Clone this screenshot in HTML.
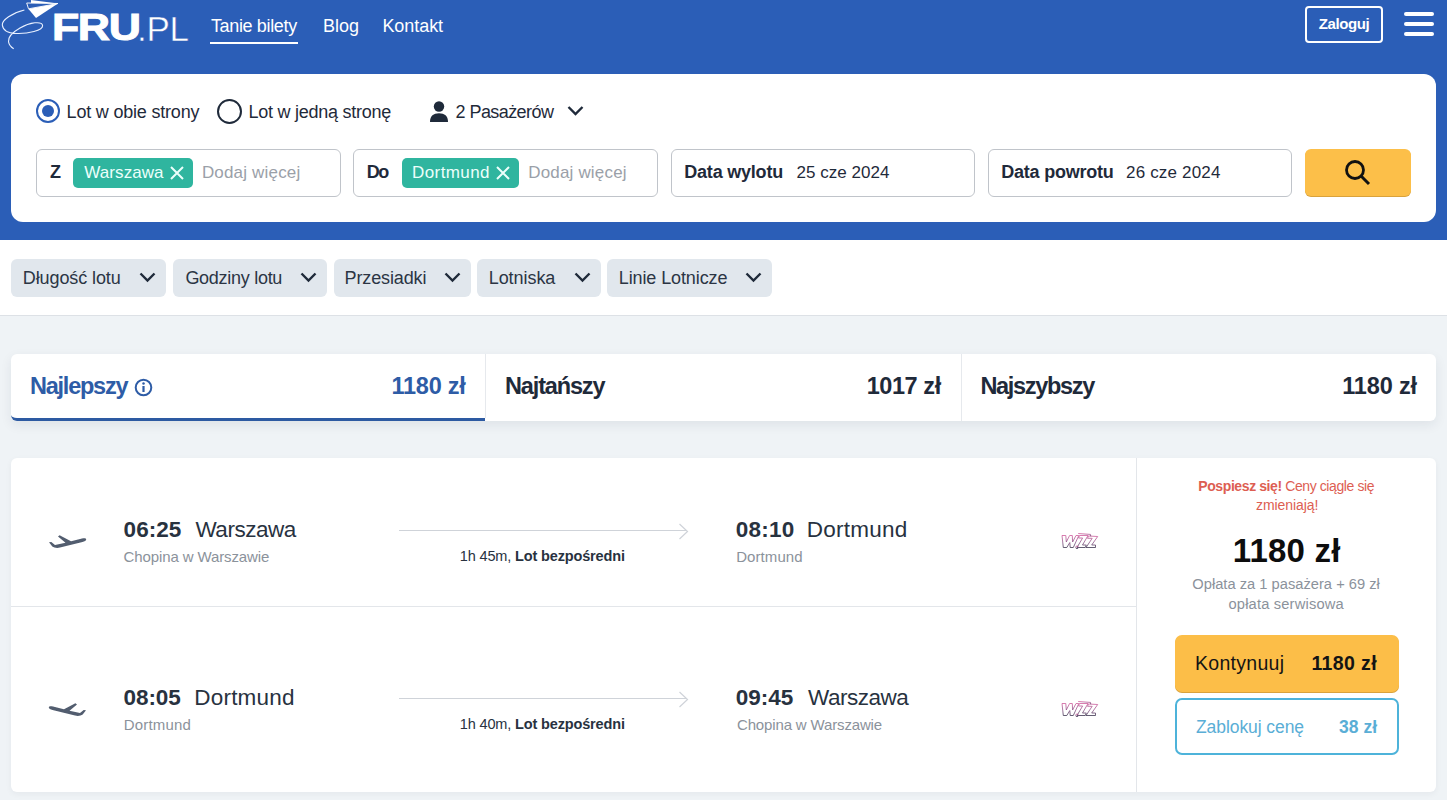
<!DOCTYPE html>
<html><head><meta charset="utf-8"><style>
html,body{margin:0;padding:0;width:1447px;height:800px;overflow:hidden;background:#eff3f6;font-family:"Liberation Sans", sans-serif;}
.t{position:absolute;white-space:nowrap;line-height:1;}
.b{position:absolute;}
</style></head><body>
<div class="b" style="left:0px;top:0px;width:1447px;height:240px;background:#2b5eb7;"></div>
<svg class="b" style="left:0;top:0" width="200" height="52" viewBox="0 0 200 52">
<path d="M24.4,10 C12,13 2,20 2.3,25 C3,31 9,33.2 16,33.5 C28,34 43,30.5 42.6,25.5 C42,21 30,22 20,28 C13,32 8,37 8.5,41.6 C9,45 11,47 13.7,48.8" fill="none" stroke="#e8f0ff" stroke-width="1.1"/>
<path d="M31,0 L58,3.5 L31,3 Z" fill="#fff"/>
<path d="M26.7,3 L58,3.5 L28.5,8.8 Z" fill="none" stroke="#fff" stroke-width="0.9"/>
<path d="M28.5,9 L58,3.5 L36,18 Z" fill="#fff"/>
</svg>
<div class="t" style="left:52.00px;top:8.86px;font-size:37.5px;font-weight:700;color:#fff;letter-spacing:-1.200px;transform:scaleX(1.19);transform-origin:left;-webkit-text-stroke:1px #fff;">FRU</div>
<div class="t" style="left:137.00px;top:10.97px;font-size:35px;font-weight:400;color:#fff;letter-spacing:-0.300px;-webkit-text-stroke:0.5px #2b5eb7;">.PL</div>
<div class="t" style="left:210.90px;top:16.76px;font-size:18px;font-weight:400;color:#fff;letter-spacing:-0.345px;">Tanie bilety</div>
<div class="b" style="left:210px;top:42px;width:88px;height:2px;background:#fff;"></div>
<div class="t" style="left:323.00px;top:16.76px;font-size:18px;font-weight:400;color:#fff;letter-spacing:0.000px;">Blog</div>
<div class="t" style="left:382.40px;top:16.76px;font-size:18px;font-weight:400;color:#fff;letter-spacing:-0.060px;">Kontakt</div>
<div class="b" style="left:1305px;top:6px;width:78px;height:37px;border:2px solid #fff;border-radius:4px;box-sizing:border-box;"></div>
<div class="t" style="left:1318.80px;top:16.30px;font-size:15px;font-weight:700;color:#fff;letter-spacing:-0.420px;">Zaloguj</div>
<div class="b" style="left:1404px;top:12px;width:30px;height:4px;background:#fff;border-radius:2px;"></div>
<div class="b" style="left:1404px;top:22px;width:30px;height:4px;background:#fff;border-radius:2px;"></div>
<div class="b" style="left:1404px;top:32px;width:30px;height:4px;background:#fff;border-radius:2px;"></div>
<div class="b" style="left:11px;top:74px;width:1425px;height:148px;background:#fff;border-radius:12px;"></div>
<div class="b" style="left:36px;top:98.5px;width:24px;height:24px;border:2.5px solid #2b5eb7;border-radius:50%;box-sizing:border-box;"></div>
<div class="b" style="left:42px;top:104.5px;width:12px;height:12px;background:#2b5eb7;border-radius:50%;"></div>
<div class="t" style="left:66.60px;top:102.76px;font-size:18px;font-weight:400;color:#1f2a3a;letter-spacing:-0.201px;">Lot w obie strony</div>
<div class="b" style="left:217px;top:98.5px;width:25px;height:25px;border:2.5px solid #1f2a3a;border-radius:50%;box-sizing:border-box;"></div>
<div class="t" style="left:248.60px;top:102.76px;font-size:18px;font-weight:400;color:#1f2a3a;letter-spacing:-0.264px;">Lot w jedną stronę</div>
<svg class="b" style="left:429px;top:101px" width="20" height="22" viewBox="0 0 20 22">
<circle cx="10" cy="5.5" r="5.2" fill="#1f2a3a"/>
<path d="M1,21 C1,15 4.5,12.3 10,12.3 C15.5,12.3 19,15 19,21 Z" fill="#1f2a3a"/>
</svg>
<div class="t" style="left:455.60px;top:102.76px;font-size:18px;font-weight:400;color:#1f2a3a;letter-spacing:-0.576px;">2 Pasażerów</div>
<svg class="b" style="left:566px;top:104px" width="19" height="13" viewBox="0 0 19 13">
<path d="M2.5,3 L9.5,10 L16.5,3" fill="none" stroke="#1f2a3a" stroke-width="2.4"/>
</svg>
<div class="b" style="left:36px;top:149px;width:305px;height:48px;border:1px solid #c0c4ca;border-radius:6px;box-sizing:border-box;"></div>
<div class="b" style="left:353px;top:149px;width:305px;height:48px;border:1px solid #c0c4ca;border-radius:6px;box-sizing:border-box;"></div>
<div class="b" style="left:670.5px;top:149px;width:304.5px;height:48px;border:1px solid #c0c4ca;border-radius:6px;box-sizing:border-box;"></div>
<div class="b" style="left:988px;top:149px;width:304px;height:48px;border:1px solid #c0c4ca;border-radius:6px;box-sizing:border-box;"></div>
<div class="t" style="left:50.00px;top:162.76px;font-size:18px;font-weight:700;color:#1f2a3a;letter-spacing:0.000px;">Z</div>
<div class="b" style="left:73px;top:158px;width:120px;height:30px;background:#2fb59f;border-radius:5px;"></div>
<div class="t" style="left:84.30px;top:164.11px;font-size:17px;font-weight:400;color:#ecfffb;letter-spacing:0.077px;">Warszawa</div>
<svg class="b" style="left:169.5px;top:166px" width="14" height="14" viewBox="0 0 14 14">
<path d="M1,1 L13,13 M13,1 L1,13" stroke="#ecfffb" stroke-width="2"/></svg>
<div class="t" style="left:201.90px;top:164.11px;font-size:17px;font-weight:400;color:#9aa0a8;letter-spacing:0.181px;">Dodaj więcej</div>
<div class="t" style="left:366.80px;top:162.76px;font-size:18px;font-weight:700;color:#1f2a3a;letter-spacing:-1.620px;">Do</div>
<div class="b" style="left:402px;top:158px;width:117px;height:30px;background:#2fb59f;border-radius:5px;"></div>
<div class="t" style="left:412.10px;top:164.11px;font-size:17px;font-weight:400;color:#ecfffb;letter-spacing:0.386px;">Dortmund</div>
<svg class="b" style="left:495.5px;top:166px" width="14" height="14" viewBox="0 0 14 14">
<path d="M1,1 L13,13 M13,1 L1,13" stroke="#ecfffb" stroke-width="2"/></svg>
<div class="t" style="left:528.20px;top:164.11px;font-size:17px;font-weight:400;color:#9aa0a8;letter-spacing:0.181px;">Dodaj więcej</div>
<div class="t" style="left:684.30px;top:162.76px;font-size:18px;font-weight:700;color:#1f2a3a;letter-spacing:-0.216px;">Data wylotu</div>
<div class="t" style="left:796.40px;top:164.11px;font-size:17px;font-weight:400;color:#1f2a3a;letter-spacing:0.036px;">25 cze 2024</div>
<div class="t" style="left:1001.30px;top:162.76px;font-size:18px;font-weight:700;color:#1f2a3a;letter-spacing:-0.228px;">Data powrotu</div>
<div class="t" style="left:1126.00px;top:164.11px;font-size:17px;font-weight:400;color:#1f2a3a;letter-spacing:0.180px;">26 cze 2024</div>
<div class="b" style="left:1305px;top:149px;width:106px;height:47px;background:#fcbf49;border-radius:6px;box-shadow:0 1px 0 #d9a23c;"></div>
<svg class="b" style="left:1343px;top:158px" width="30" height="30" viewBox="0 0 30 30">
<circle cx="12" cy="12" r="8.5" fill="none" stroke="#111" stroke-width="2.8"/>
<path d="M18.3,18.3 L26,26" stroke="#111" stroke-width="3"/>
</svg>
<div class="b" style="left:0px;top:240px;width:1447px;height:75px;background:#fff;border-bottom:1px solid #dde1e6;"></div>
<div class="b" style="left:11px;top:259px;width:155px;height:38px;background:#e1e7ed;border-radius:6px;"></div>
<div class="t" style="left:22.80px;top:269.26px;font-size:18px;font-weight:400;color:#2b3544;letter-spacing:-0.099px;">Długość lotu</div>
<svg class="b" style="left:138px;top:270px" width="19" height="14" viewBox="0 0 19 14">
<path d="M2.5,3.5 L9.5,10.5 L16.5,3.5" fill="none" stroke="#1f2a3a" stroke-width="2.4"/>
</svg>
<div class="b" style="left:173px;top:259px;width:154px;height:38px;background:#e1e7ed;border-radius:6px;"></div>
<div class="t" style="left:185.40px;top:269.26px;font-size:18px;font-weight:400;color:#2b3544;letter-spacing:-0.280px;">Godziny lotu</div>
<svg class="b" style="left:299px;top:270px" width="19" height="14" viewBox="0 0 19 14">
<path d="M2.5,3.5 L9.5,10.5 L16.5,3.5" fill="none" stroke="#1f2a3a" stroke-width="2.4"/>
</svg>
<div class="b" style="left:333.5px;top:259px;width:137.0px;height:38px;background:#e1e7ed;border-radius:6px;"></div>
<div class="t" style="left:344.50px;top:269.26px;font-size:18px;font-weight:400;color:#2b3544;letter-spacing:-0.120px;">Przesiadki</div>
<svg class="b" style="left:442.5px;top:270px" width="19" height="14" viewBox="0 0 19 14">
<path d="M2.5,3.5 L9.5,10.5 L16.5,3.5" fill="none" stroke="#1f2a3a" stroke-width="2.4"/>
</svg>
<div class="b" style="left:477px;top:259px;width:123.5px;height:38px;background:#e1e7ed;border-radius:6px;"></div>
<div class="t" style="left:488.70px;top:269.26px;font-size:18px;font-weight:400;color:#2b3544;letter-spacing:-0.051px;">Lotniska</div>
<svg class="b" style="left:572.5px;top:270px" width="19" height="14" viewBox="0 0 19 14">
<path d="M2.5,3.5 L9.5,10.5 L16.5,3.5" fill="none" stroke="#1f2a3a" stroke-width="2.4"/>
</svg>
<div class="b" style="left:607px;top:259px;width:165px;height:38px;background:#e1e7ed;border-radius:6px;"></div>
<div class="t" style="left:618.80px;top:269.26px;font-size:18px;font-weight:400;color:#2b3544;letter-spacing:-0.112px;">Linie Lotnicze</div>
<svg class="b" style="left:744px;top:270px" width="19" height="14" viewBox="0 0 19 14">
<path d="M2.5,3.5 L9.5,10.5 L16.5,3.5" fill="none" stroke="#1f2a3a" stroke-width="2.4"/>
</svg>
<div class="b" style="left:11px;top:354px;width:1425px;height:67px;background:#fff;border-radius:6px;box-shadow:0 4px 12px rgba(30,40,60,0.08);"></div>
<div class="b" style="left:485px;top:354px;width:1px;height:64px;background:#e6e9ed;"></div>
<div class="b" style="left:961px;top:354px;width:1px;height:67px;background:#e6e9ed;"></div>
<div class="b" style="left:11px;top:354px;width:474px;height:67px;border-bottom:3px solid #2d5aa2;border-radius:6px 0 0 6px;box-sizing:border-box;"></div>
<div class="t" style="left:30.00px;top:374.91px;font-size:23.5px;font-weight:700;color:#2e5ca6;letter-spacing:-1.238px;">Najlepszy</div>
<svg class="b" style="left:134px;top:378px" width="19" height="19" viewBox="0 0 19 19">
<circle cx="9.5" cy="9.5" r="7.8" fill="none" stroke="#2e5ca6" stroke-width="2"/>
<rect x="8.4" y="8" width="2.2" height="6" fill="#2e5ca6"/><circle cx="9.5" cy="5.6" r="1.25" fill="#2e5ca6"/>
</svg>
<div class="t" style="right:981.40px;text-align:right;top:374.91px;font-size:23.5px;font-weight:700;color:#2e5ca6;letter-spacing:-0.240px;">1180 zł</div>
<div class="t" style="left:505.00px;top:374.91px;font-size:23.5px;font-weight:700;color:#1f2a3a;letter-spacing:-1.145px;">Najtańszy</div>
<div class="t" style="right:506.20px;text-align:right;top:374.91px;font-size:23.5px;font-weight:700;color:#1f2a3a;letter-spacing:-0.420px;">1017 zł</div>
<div class="t" style="left:980.40px;top:374.91px;font-size:23.5px;font-weight:700;color:#1f2a3a;letter-spacing:-1.320px;">Najszybszy</div>
<div class="t" style="right:30.00px;text-align:right;top:374.91px;font-size:23.5px;font-weight:700;color:#1f2a3a;letter-spacing:-0.150px;">1180 zł</div>
<div class="b" style="left:11px;top:458px;width:1425px;height:334px;background:#fff;border-radius:6px;box-shadow:0 2px 6px rgba(30,40,60,0.05);"></div>
<div class="b" style="left:1136px;top:458px;width:1px;height:334px;background:#e3e6ea;"></div>
<div class="b" style="left:11px;top:606px;width:1125px;height:1px;background:#e3e6ea;"></div>
<svg class="b" style="left:44px;top:528px;" width="48" height="26" viewBox="0 0 48 26">
<path d="M5,14.3 L7.3,13.9 L11,17 L21.5,14.8 L14,8.4 L15.6,7.3 L27,13.3 L38,10.6 C40.5,10 42.2,10.4 42.2,11.4 C42.2,12.5 40.5,13.3 38.5,14 L16,19.6 C13,20.2 10,19.8 8.3,18.6 Z" fill="#525d6f"/>
</svg>
<div class="t" style="left:123.60px;top:519.45px;font-size:22.5px;font-weight:700;color:#28323f;letter-spacing:0.041px;">06:25</div>
<div class="t" style="left:195.40px;top:519.45px;font-size:22.5px;font-weight:400;color:#28323f;letter-spacing:-0.462px;">Warszawa</div>
<div class="t" style="left:123.60px;top:549.30px;font-size:15px;font-weight:400;color:#8b929b;letter-spacing:-0.120px;">Chopina w Warszawie</div>
<div class="b" style="left:399px;top:530px;width:287px;height:1px;background:#cfd3d9;"></div>
<svg class="b" style="left:678px;top:523px" width="12" height="17" viewBox="0 0 12 17">
<path d="M1.5,1 L9.5,8.5 L1.5,16" fill="none" stroke="#cfd3d9" stroke-width="1.2"/></svg>
<div class="t" style="left:242.30px;width:600px;text-align:center;top:548.73px;font-size:14.5px;font-weight:400;color:#28323f;letter-spacing:-0.146px;">1h 45m, <b>Lot bezpośredni</b></div>
<div class="t" style="left:735.80px;top:519.45px;font-size:22.5px;font-weight:700;color:#28323f;letter-spacing:0.225px;">08:10</div>
<div class="t" style="left:806.80px;top:519.45px;font-size:22.5px;font-weight:400;color:#28323f;letter-spacing:0.257px;">Dortmund</div>
<div class="t" style="left:736.20px;top:549.30px;font-size:15px;font-weight:400;color:#8b929b;letter-spacing:0.078px;">Dortmund</div>
<svg class="b" style="left:1050px;top:525px" width="60" height="35" viewBox="0 0 60 35">
<defs><linearGradient id="wza" x1="0" y1="0" x2="0" y2="1"><stop offset="0" stop-color="#cf5c9c"/><stop offset="0.55" stop-color="#8d5488"/><stop offset="1" stop-color="#3e3550"/></linearGradient></defs>
<g fill="none" stroke="url(#wza)" stroke-width="0.8" stroke-linejoin="round">
<path d="M12,10.5 L15.8,10.5 L16.3,17 L19.6,10.5 L22.3,10.5 L22.6,17 L26,10.5 L28.8,10.5 L23.3,22.5 L20.2,22.5 L19.8,17.5 L16.8,22.5 L13.3,22.5 Z"/>
<path d="M29.5,10.5 L38,10.5 L32.5,20 L36.3,20 L35.2,22.5 L27,22.5 L32.6,13 L28.5,13 Z"/>
<path d="M38.5,11 L47.7,11.5 L41.7,20 L45.5,20 L45.5,22.5 L36,22.5 L42.2,13.3 L37.5,13.3 Z"/>
<path d="M28.2,8.5 L40.5,9.4 L40.7,11.2"/>
<circle cx="27" cy="22.3" r="1.3"/>
</g></svg>
<svg class="b" style="left:43px;top:696px;transform:scaleX(-1);" width="48" height="26" viewBox="0 0 48 26">
<path d="M5,14.3 L7.3,13.9 L11,17 L21.5,14.8 L14,8.4 L15.6,7.3 L27,13.3 L38,10.6 C40.5,10 42.2,10.4 42.2,11.4 C42.2,12.5 40.5,13.3 38.5,14 L16,19.6 C13,20.2 10,19.8 8.3,18.6 Z" fill="#525d6f"/>
</svg>
<div class="t" style="left:123.60px;top:687.45px;font-size:22.5px;font-weight:700;color:#28323f;letter-spacing:-0.086px;">08:05</div>
<div class="t" style="left:194.20px;top:687.45px;font-size:22.5px;font-weight:400;color:#28323f;letter-spacing:0.230px;">Dortmund</div>
<div class="t" style="left:123.80px;top:717.30px;font-size:15px;font-weight:400;color:#8b929b;letter-spacing:0.182px;">Dortmund</div>
<div class="b" style="left:399px;top:698px;width:287px;height:1px;background:#cfd3d9;"></div>
<svg class="b" style="left:678px;top:691px" width="12" height="17" viewBox="0 0 12 17">
<path d="M1.5,1 L9.5,8.5 L1.5,16" fill="none" stroke="#cfd3d9" stroke-width="1.2"/></svg>
<div class="t" style="left:242.30px;width:600px;text-align:center;top:716.73px;font-size:14.5px;font-weight:400;color:#28323f;letter-spacing:-0.146px;">1h 40m, <b>Lot bezpośredni</b></div>
<div class="t" style="left:735.80px;top:687.45px;font-size:22.5px;font-weight:700;color:#28323f;letter-spacing:0.000px;">09:45</div>
<div class="t" style="left:808.00px;top:687.45px;font-size:22.5px;font-weight:400;color:#28323f;letter-spacing:-0.490px;">Warszawa</div>
<div class="t" style="left:737.00px;top:717.30px;font-size:15px;font-weight:400;color:#8b929b;letter-spacing:-0.150px;">Chopina w Warszawie</div>
<svg class="b" style="left:1050px;top:693px" width="60" height="35" viewBox="0 0 60 35">
<defs><linearGradient id="wzb" x1="0" y1="0" x2="0" y2="1"><stop offset="0" stop-color="#cf5c9c"/><stop offset="0.55" stop-color="#8d5488"/><stop offset="1" stop-color="#3e3550"/></linearGradient></defs>
<g fill="none" stroke="url(#wzb)" stroke-width="0.8" stroke-linejoin="round">
<path d="M12,10.5 L15.8,10.5 L16.3,17 L19.6,10.5 L22.3,10.5 L22.6,17 L26,10.5 L28.8,10.5 L23.3,22.5 L20.2,22.5 L19.8,17.5 L16.8,22.5 L13.3,22.5 Z"/>
<path d="M29.5,10.5 L38,10.5 L32.5,20 L36.3,20 L35.2,22.5 L27,22.5 L32.6,13 L28.5,13 Z"/>
<path d="M38.5,11 L47.7,11.5 L41.7,20 L45.5,20 L45.5,22.5 L36,22.5 L42.2,13.3 L37.5,13.3 Z"/>
<path d="M28.2,8.5 L40.5,9.4 L40.7,11.2"/>
<circle cx="27" cy="22.3" r="1.3"/>
</g></svg>
<div class="t" style="left:986.20px;width:600px;text-align:center;top:479.15px;font-size:14px;font-weight:400;color:#dd5e52;letter-spacing:-0.405px;"><b>Pospiesz się!</b> Ceny ciągle się</div>
<div class="t" style="left:987.20px;width:600px;text-align:center;top:498.15px;font-size:14px;font-weight:400;color:#dd5e52;letter-spacing:-0.060px;">zmieniają!</div>
<div class="t" style="left:986.70px;width:600px;text-align:center;top:534.37px;font-size:33px;font-weight:700;color:#0d0d0d;letter-spacing:0.210px;">1180 zł</div>
<div class="t" style="left:986.10px;width:600px;text-align:center;top:576.56px;font-size:14.7px;font-weight:400;color:#8b929b;letter-spacing:0.005px;">Opłata za 1 pasażera + 69 zł</div>
<div class="t" style="left:986.20px;width:600px;text-align:center;top:597.06px;font-size:14.7px;font-weight:400;color:#8b929b;letter-spacing:0.168px;">opłata serwisowa</div>
<div class="b" style="left:1175px;top:635px;width:224px;height:56.5px;background:#fcbe48;border-radius:7px;box-shadow:0 1px 0 #d9a23c;"></div>
<div class="t" style="left:1195.00px;top:654.49px;font-size:19.5px;font-weight:400;color:#141414;letter-spacing:0.292px;">Kontynuuj</div>
<div class="t" style="right:70.00px;text-align:right;top:654.49px;font-size:19.5px;font-weight:700;color:#141414;letter-spacing:0.390px;">1180 zł</div>
<div class="b" style="left:1175px;top:698px;width:224px;height:56.5px;border:2px solid #4db3da;border-radius:7px;box-sizing:border-box;background:#fff;"></div>
<div class="t" style="left:1196.00px;top:718.69px;font-size:17.5px;font-weight:400;color:#5aaed6;letter-spacing:-0.075px;">Zablokuj cenę</div>
<div class="t" style="right:70.00px;text-align:right;top:718.69px;font-size:17.5px;font-weight:700;color:#5aaed6;letter-spacing:-0.004px;">38 zł</div>
</body></html>
